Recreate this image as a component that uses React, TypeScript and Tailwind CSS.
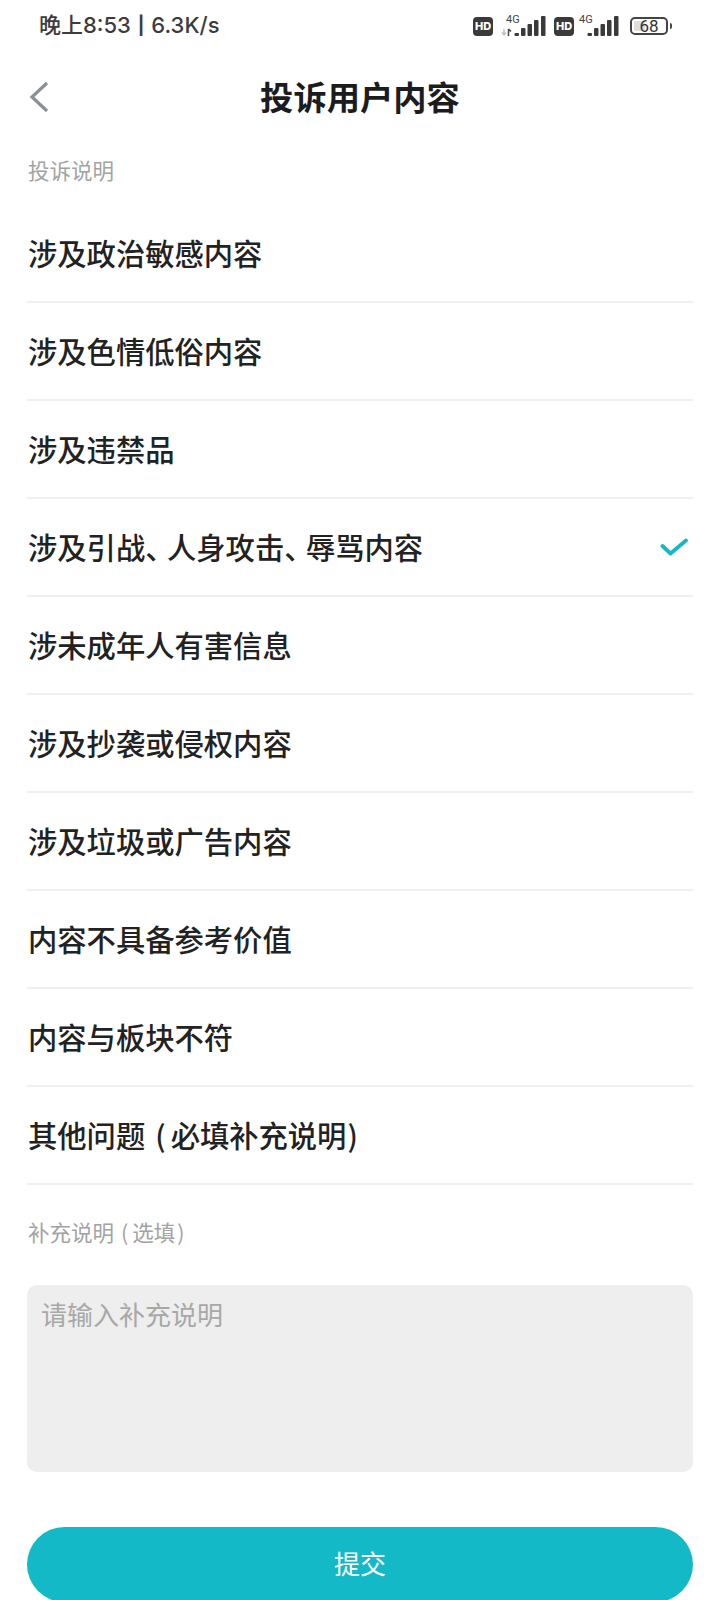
import type { ReactNode } from "react";

const Dun = () => <span className="tracking-[-7.5px]">、</span>;

const items: { key: string; node: ReactNode }[] = [
  { key: "a", node: "涉及政治敏感内容" },
  { key: "b", node: "涉及色情低俗内容" },
  { key: "c", node: "涉及违禁品" },
  {
    key: "d",
    node: (
      <>
        涉及引战<Dun />人身攻击<Dun />辱骂内容
      </>
    ),
  },
  { key: "e", node: "涉未成年人有害信息" },
  { key: "f", node: "涉及抄袭或侵权内容" },
  { key: "g", node: "涉及垃圾或广告内容" },
  { key: "h", node: "内容不具备参考价值" },
  { key: "i", node: "内容与板块不符" },
  {
    key: "j",
    node: (
      <>
        其他问题<span className="ml-[10px] mr-[5px]">(</span>必填补充说明<span className="ml-[1px]">)</span>
      </>
    ),
  },
];

const cjk = "font-['Noto_Sans_CJK_SC',sans-serif]";

function Hd() {
  return (
    <span className="flex h-[19px] w-[20px] items-center justify-center rounded-[4px] bg-[#3a3a3a] font-['Inter',sans-serif] text-[11px] font-extrabold leading-none text-white">
      HD
    </span>
  );
}

function Signal({ arrows }: { arrows?: boolean }) {
  return (
    <svg width="46" height="24" viewBox="0 0 46 24" className="block">
      <text x="6" y="9" fontSize="11" fontFamily="Roboto, sans-serif" fill="#444">4G</text>
      {arrows && (
        <>
          <path d="M4 15v6M2 18.5 4 21l2-2.5" fill="none" stroke="#bdbdbd" strokeWidth="1.4" />
          <path d="M8.5 22v-7M8.5 15l2.5 2.5" fill="none" stroke="#444" strokeWidth="1.5" />
        </>
      )}
      <rect x="14.5" y="19" width="4.5" height="3" rx="1" fill="#3a3a3a" />
      <rect x="21" y="14" width="4.5" height="8" rx="1" fill="#3a3a3a" />
      <rect x="27.5" y="10" width="4.5" height="12" rx="1" fill="#3a3a3a" />
      <rect x="34" y="6" width="4.5" height="16" rx="1" fill="#3a3a3a" />
      <rect x="41" y="2" width="4.5" height="20" rx="1" fill="#3a3a3a" />
    </svg>
  );
}

export default function App() {
  return (
    <div className={`relative h-[1600px] w-[720px] overflow-hidden bg-white ${cjk}`}>
      <div className="flex h-[54px] items-center justify-between pb-[5px] pl-[39px] pr-[48px]">
        <span className="font-['Inter','Noto_Sans_CJK_SC',sans-serif] text-[22px] font-medium leading-none text-[#3c3c3c]">
          晚上8:53 <span className="mx-[1px] align-[1px] text-[18px] font-bold">|</span> 6.3K/s
        </span>
        <div className="mt-[3px] flex items-center">
          <Hd />
          <span className="ml-[7px]"><Signal arrows /></span>
          <span className="ml-[8px]"><Hd /></span>
          <span className="-ml-px"><Signal /></span>
          <div className="ml-[11px] flex items-center">
            <div className="relative flex h-[18px] w-[38px] items-center justify-center rounded-[5px] border-2 border-[#444] font-['Roboto',sans-serif] text-[17px] leading-none text-[#333]">
              <span className="absolute bottom-[2px] left-[2px] top-[2px] w-[11px] rounded-[1px] bg-[#dedede]" />
              <span className="relative">68</span>
            </div>
            <span className="ml-[2px] h-[6px] w-[2px] rounded-r bg-[#444]" />
          </div>
        </div>
      </div>

      <div className="relative flex h-[88px] items-center justify-center pb-[4px]">
        <svg width="20" height="32" viewBox="0 0 20 32" className="absolute left-[29px] top-[27px]">
          <path d="M18 2 3 16l15 14" fill="none" stroke="#8a9196" strokeWidth="3.2" />
        </svg>
        <span className="text-[33.3px] font-bold leading-none text-[#1c1c1e]">投诉用户内容</span>
      </div>

      <div className="mx-[27px]">
        <div className="flex h-[63px] items-center pb-[7px] pl-px text-[21.5px] leading-none text-[#a3a3a3]">投诉说明</div>
        {items.map((t, i) => (
          <div
            key={t.key}
            className="flex h-[98px] items-center justify-between border-b-2 border-[#f0f0f0] pl-px text-[29.3px] font-medium leading-none text-[#222]"
          >
            <span>{t.node}</span>
            {i === 3 && (
              <svg width="30" height="22" viewBox="0 0 30 22" className="mr-[3px]">
                <path d="M2.5 10 10.5 17.5 26 4.5" fill="none" stroke="#14b9c8" strokeWidth="3.8" strokeLinecap="round" strokeLinejoin="round" />
              </svg>
            )}
          </div>
        ))}
        <div className="flex h-[100px] items-center pb-[6px] pl-px text-[21.5px] leading-none text-[#a3a3a3]">
          补充说明<span className="ml-[7px] mr-[4px]">(</span>选填<span className="ml-[2px]">)</span>
        </div>
        <div className="h-[187px] rounded-[10px] bg-[#eeeeee] px-[14px] py-[14px] text-[26px] leading-[30px] text-[#a8a8a8]">
          请输入补充说明
        </div>
        <button className="mt-[55px] flex h-[75px] w-full items-center justify-center rounded-full bg-[#14b9c8] pb-[3px] text-[26px] leading-none text-white">
          提交
        </button>
      </div>
    </div>
  );
}
